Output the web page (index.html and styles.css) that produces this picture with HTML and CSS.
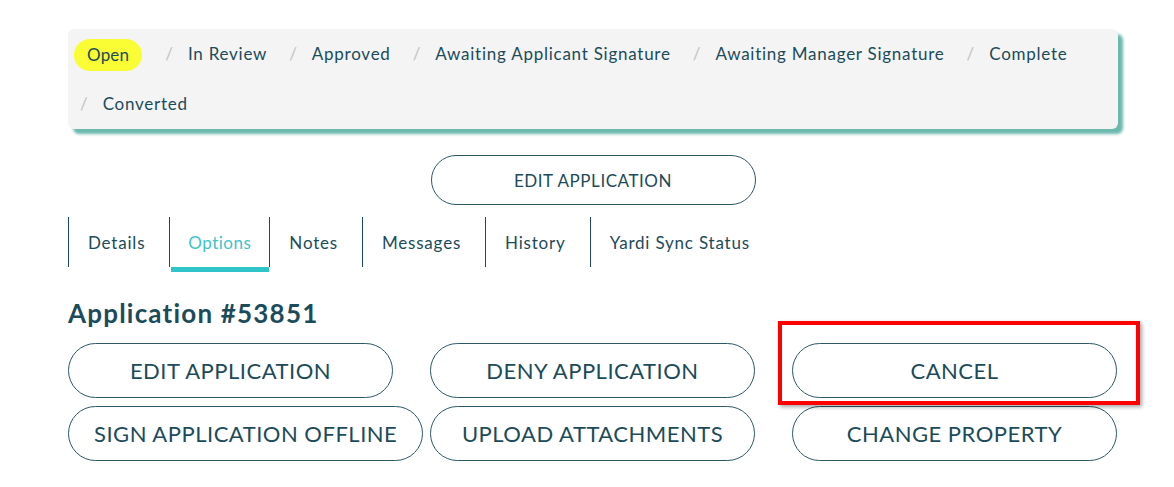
FILE: index.html
```html
<!DOCTYPE html>
<html lang="en">
<head>
<meta charset="utf-8">
<title>Application #53851</title>
<link rel="stylesheet" href="styles.css">
</head>
<body>
<div class="page">
  <ol class="status">
    <li class="status-item"><span class="pill">Open</span></li>
    <li class="status-item">In Review</li>
    <li class="status-item">Approved</li>
    <li class="status-item">Awaiting Applicant Signature</li>
    <li class="status-item">Awaiting Manager Signature</li>
    <li class="status-item">Complete</li>
    <li class="status-item">Converted</li>
  </ol>

  <div class="top-action">
    <button class="btn btn-top">EDIT APPLICATION</button>
  </div>

  <nav class="tabs">
    <a class="tab">Details</a>
    <a class="tab active">Options</a>
    <a class="tab">Notes</a>
    <a class="tab">Messages</a>
    <a class="tab">History</a>
    <a class="tab">Yardi Sync Status</a>
  </nav>

  <h2 class="title">Application #53851</h2>

  <div class="actions">
    <button class="btn btn-lg">EDIT APPLICATION</button>
    <button class="btn btn-lg">DENY APPLICATION</button>
    <button class="btn btn-lg">CANCEL</button>
    <button class="btn btn-lg">SIGN APPLICATION OFFLINE</button>
    <button class="btn btn-lg">UPLOAD ATTACHMENTS</button>
    <button class="btn btn-lg">CHANGE PROPERTY</button>
  </div>
</div>
<div class="highlight"></div>
</body>
</html>
```

FILE: styles.css
```css
html, body {
  margin: 0;
  padding: 0;
  background: #ffffff;
}

body {
  font-family: Lato, "Noto Sans", Arial, sans-serif;
  color: #1c4b5a;
}

.page {
  width: 1050px;
  margin-left: 68px;
  padding-top: 29px;
}

.status {
  list-style: none;
  margin: 0;
  padding: 0 0 0 6px;
  display: flex;
  flex-wrap: wrap;
  background: #f4f4f4;
  border-radius: 6px;
  box-shadow: 5px 5px 3px #6bb8ad;
}

.status-item {
  height: 50px;
  line-height: 50px;
  font-size: 17px;
  letter-spacing: 0.75px;
  padding-right: 16px;
  white-space: nowrap;
}

.status-item + .status-item {
  padding-left: 6px;
}

.status-item + .status-item::before {
  content: "/";
  color: #c3c3c3;
  padding-right: 15px;
  letter-spacing: 0;
}

.pill {
  display: inline-block;
  background: #fafd33;
  border-radius: 16px;
  height: 32px;
  line-height: 32px;
  padding: 0 13px;
  letter-spacing: 0.2px;
  vertical-align: middle;
  margin-top: -2px;
  margin-right: 1px;
}

.top-action {
  display: flex;
  justify-content: center;
  margin-top: 26px;
}

.btn {
  font-family: Lato, "Noto Sans", Arial, sans-serif;
  color: #1c4b5a;
  background: #ffffff;
  border: 1px solid #2b5965;
  border-radius: 28px;
  white-space: nowrap;
  cursor: pointer;
}

.btn-top {
  width: 325px;
  height: 50px;
  font-size: 17px;
  letter-spacing: 0.55px;
  border-radius: 25px;
}

.tabs {
  display: flex;
  margin-top: 12px;
  height: 55px;
}

.tab {
  display: block;
  height: 50px;
  line-height: 52px;
  padding: 0 24px 0 19px;
  border-left: 1px solid #1c4b5a;
  font-size: 17px;
  letter-spacing: 0.8px;
  color: #1c4b5a;
}

.tab.active {
  color: #3fc3cb;
  position: relative;
  padding: 0 18px 0 18px;
  letter-spacing: 0.5px;
}

.tab.active::after {
  content: "";
  position: absolute;
  left: 1px;
  right: 0;
  top: 50px;
  height: 5px;
  background: #2fc4c7;
}

.title {
  margin: 25px 0 0;
  font-size: 26px;
  font-weight: 700;
  line-height: 32px;
  letter-spacing: 1.2px;
  color: #1c4b5a;
}

.actions {
  display: grid;
  grid-template-columns: 325px 325px 325px;
  column-gap: 37px;
  row-gap: 8px;
  margin-top: 14px;
}

.btn-lg {
  justify-self: start;
  min-width: 100%;
  width: max-content;
  height: 55px;
  padding: 0 25px;
  font-size: 22px;
  letter-spacing: 0.5px;
}

.highlight {
  position: absolute;
  left: 778px;
  top: 321px;
  width: 354px;
  height: 76px;
  border: 4px solid #ff0000;
  box-shadow: 2px 2px 4px rgba(0, 0, 0, 0.35);
  pointer-events: none;
}
```
